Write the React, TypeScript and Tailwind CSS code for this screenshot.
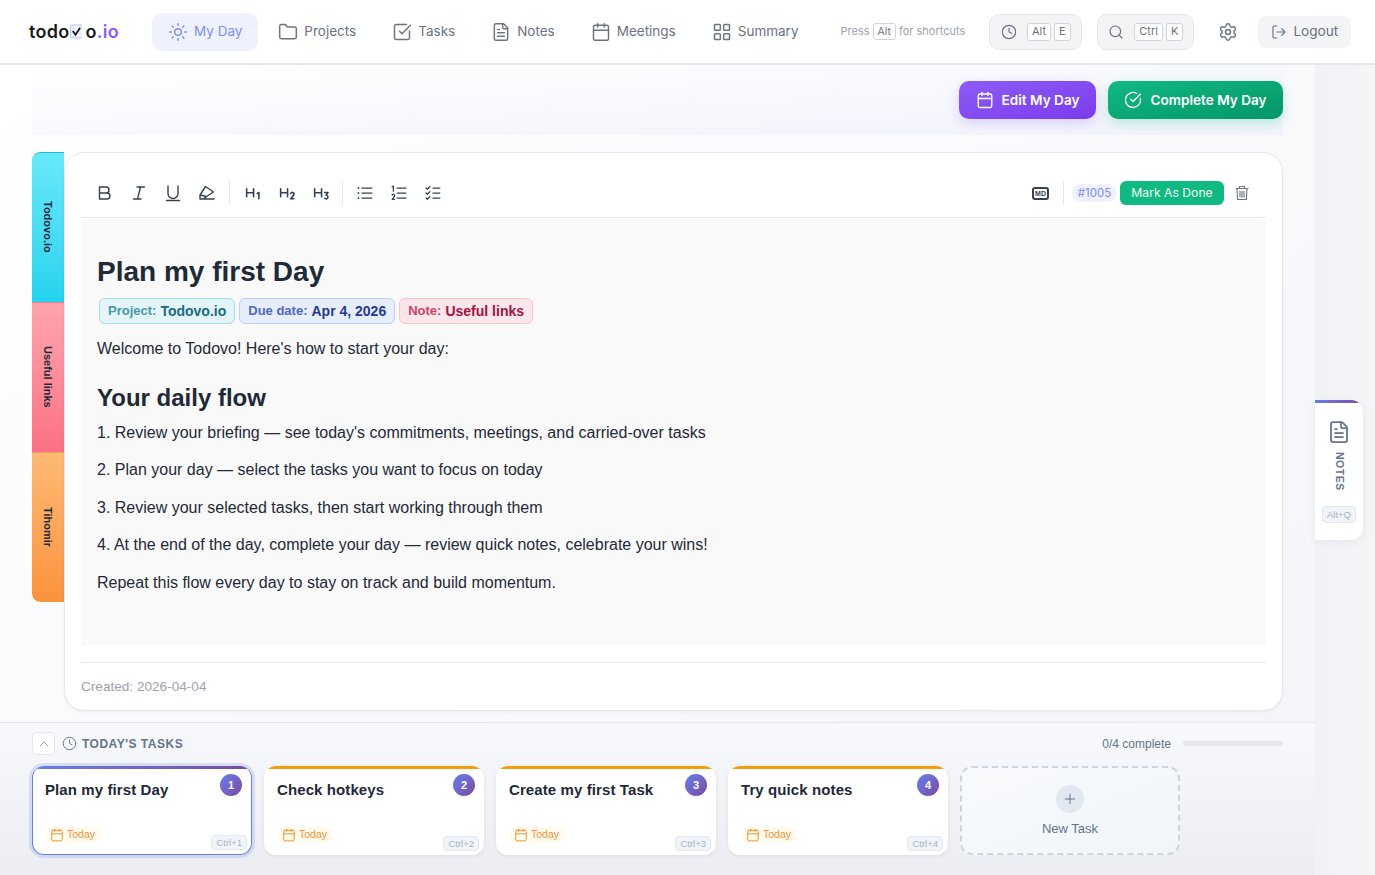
import React from 'react';
import {
  Sun, Folder, SquareCheckBig, FileText, Calendar, LayoutGrid, Clock, Search, Settings, LogOut,
  CircleCheckBig, ChevronUp, Plus,
} from 'lucide-react';
import {
  PiTextHOneBold, PiTextHTwoBold, PiTextHThreeBold,
  PiListBullets, PiListNumbers, PiListChecks,
} from 'react-icons/pi';

const sans = "font-['Liberation_Sans',sans-serif]";

const navItems = [
  { label: 'Projects', icon: Folder },
  { label: 'Tasks', icon: SquareCheckBig },
  { label: 'Notes', icon: FileText },
  { label: 'Meetings', icon: Calendar },
  { label: 'Summary', icon: LayoutGrid },
];

const tabs = [
  { label: 'Todovo.io', className: 'bg-gradient-to-b from-[#67e8f9] to-[#22d3ee] border-t border-[#22b8cf] rounded-tl-lg pb-[2px]' },
  { label: 'Useful links', className: 'bg-gradient-to-b from-[#fda4af] to-[#fb7185] border-t border-[#f27a8a] pb-[2px]' },
  { label: 'Tihomir', className: 'bg-gradient-to-b from-[#fdba74] to-[#fb923c] border-t border-[#f0a060] rounded-bl-lg' },
];

const tasks = [
  { title: 'Plan my first Day', n: 1, active: true },
  { title: 'Check hotkeys', n: 2, active: false },
  { title: 'Create my first Task', n: 3, active: false },
  { title: 'Try quick notes', n: 4, active: false },
];

const steps = [
  "1. Review your briefing — see today's commitments, meetings, and carried-over tasks",
  '2. Plan your day — select the tasks you want to focus on today',
  '3. Review your selected tasks, then start working through them',
  '4. At the end of the day, complete your day — review quick notes, celebrate your wins!',
  'Repeat this flow every day to stay on track and build momentum.',
];

function Key({ children }: { children: React.ReactNode }) {
  return (
    <span className="inline-flex h-[18px] items-center rounded-[3px] border border-[#d1d5db] bg-white px-1 text-[11px] leading-none text-[#6b7280]">
      {children}
    </span>
  );
}

function Logo() {
  return (
    <div className="flex w-[90px] items-center text-[18px] font-semibold leading-none tracking-[0.3px] text-[#1a1a1a]">
      <span>todo</span>
      <svg width="14" height="15" viewBox="0 0 14 15" fill="none" className="mr-px">
        <rect x="0.5" y="0.5" width="13" height="14" rx="1.5" fill="#eef2ff" stroke="#b4bffc" />
        <path d="M3 7 L6 11 L11 3.5" stroke="#111" strokeWidth="1.8" />
      </svg>
      <span className="ml-[2px]">o</span>
      <span className="text-[#8b5cf6]">.io</span>
    </div>
  );
}

function Header() {
  return (
    <header className="flex h-[65px] shrink-0 items-center border-b-2 border-[#e5e7eb] bg-white pl-[29px]">
      <Logo />
      <nav className="ml-[33px] flex items-center gap-1">
        <a className="flex h-[38px] items-center gap-1.5 rounded-[10px] bg-[#eff2fe] px-4 text-[13.5px] text-[#818cf8]">
          <Sun className="h-5 w-5" strokeWidth={1.75} />
          My Day
        </a>
        {navItems.map((item) => (
          <a key={item.label} className="flex h-[38px] items-center gap-1.5 px-4 text-[13.5px] text-[#6b7280]">
            <item.icon className="h-5 w-5" strokeWidth={1.75} />
            {item.label}
          </a>
        ))}
      </nav>
      <div className="ml-[26px] flex items-center gap-[3px] text-[11px] text-[#9ca3af]">
        Press <span className="rounded-[3px] border border-[#d1d5db] px-1 text-[10.5px] text-[#6b7280]">Alt</span> for shortcuts
      </div>
      <button className="ml-6 flex h-9 w-[93px] items-center justify-center gap-2 rounded-[10px] border border-[#e5e7eb] bg-[#f3f4f6] text-[#6b7280]">
        <Clock className="h-4 w-4" strokeWidth={1.75} />
        <span className="ml-0.5 flex gap-[3px]">
          <Key>Alt</Key>
          <Key>E</Key>
        </span>
      </button>
      <button className="ml-[15px] flex h-9 w-[97px] items-center justify-center gap-2 rounded-[10px] border border-[#e5e7eb] bg-[#f3f4f6] text-[#6b7280]">
        <Search className="h-4 w-4" strokeWidth={1.75} />
        <span className="ml-0.5 flex gap-[3px]">
          <Key>Ctrl</Key>
          <Key>K</Key>
        </span>
      </button>
      <Settings className="ml-6 h-5 w-5 text-[#6b7280]" strokeWidth={1.75} />
      <button className="ml-5 flex h-8 w-[93px] items-center justify-center gap-1.5 rounded-lg bg-[#f3f4f6] text-[13.6px] text-[#6b7280]">
        <LogOut className="h-4 w-4" strokeWidth={1.75} />
        Logout
      </button>
    </header>
  );
}

function ToolButton({ children, size = 'text-[20px]' }: { children: React.ReactNode; size?: string }) {
  return <button className={`flex h-7 w-7 items-center justify-center text-[#374151] ${size}`}>{children}</button>;
}

function Glyph({ d }: { d: string }) {
  return (
    <svg width="20" height="20" viewBox="0 0 20 20" fill="none" stroke="currentColor" strokeWidth="1.4" strokeLinejoin="round" strokeLinecap="round">
      <path d={d} />
    </svg>
  );
}

function Toolbar() {
  return (
    <div className="mt-[17px] flex h-[48px] items-start border-b border-[#e5e7eb] pl-2.5 pr-4">
      <div className="flex h-[46px] w-full items-center">
        <div className="flex gap-1.5">
          <ToolButton><Glyph d="M4.5 4 h6.5 a3 3 0 0 1 0 6 H4.5 Z M4.5 10 h7.5 a3 3 0 0 1 0 6 H4.5 Z" /></ToolButton>
          <ToolButton><Glyph d="M8 4 h7.5 M4.5 16 h7.5 M11.5 4 L8.5 16" /></ToolButton>
          <ToolButton><Glyph d="M5 3 v7.5 a5 5 0 0 0 10 0 V3 M3.5 17.5 h13" /></ToolButton>
          <ToolButton><Glyph d="M8.5 3.5 L3 12 V16 H6.5 L9.5 13.5 L16.5 9 Z M3 12 L9.5 13.5 M6.5 16 H17" /></ToolButton>
        </div>
        <div className="mx-2 h-6 w-px bg-[#e5e7eb]" />
        <div className="flex gap-1.5">
          <ToolButton size="text-[17px]"><PiTextHOneBold /></ToolButton>
          <ToolButton size="text-[17px]"><PiTextHTwoBold /></ToolButton>
          <ToolButton size="text-[17px]"><PiTextHThreeBold /></ToolButton>
        </div>
        <div className="mx-2 h-6 w-px bg-[#e5e7eb]" />
        <div className="flex gap-1.5">
          <ToolButton><PiListBullets /></ToolButton>
          <ToolButton><PiListNumbers /></ToolButton>
          <ToolButton><PiListChecks /></ToolButton>
        </div>
        <div className="ml-auto flex items-center">
          <span className={`flex h-[13px] w-[17px] items-center justify-center rounded-[3px] border-2 border-[#374151] text-[7px] font-bold leading-none text-[#374151] ${sans}`}>
            MD
          </span>
          <div className="mx-[14px] h-6 w-px bg-[#e5e7eb]" />
          <span className="mr-[3px] -ml-[6px] w-[45px] rounded-full bg-[#eef2ff] py-0.5 text-center text-[11.5px] leading-[14px] text-[#818cf8]">#1005</span>
          <button className="h-6 w-[104px] rounded-md bg-[#10b981] text-[12.2px] text-[#f0fdf4]">Mark As Done</button>
          <svg width="16" height="16" viewBox="0 0 16 16" fill="none" stroke="#6b7280" strokeWidth="1.1" className="ml-[10px]">
            <path d="M1.5 3.5h13M5.5 3.5V1.5h5v2M3 3.5l.6 11h8.8l.6-11M6 6v6.5M8 6v6.5M10 6v6.5" />
          </svg>
        </div>
      </div>
    </div>
  );
}

function Badge({ label, value, className, labelClass, valueClass }: { label: string; value: string; className: string; labelClass: string; valueClass: string }) {
  return (
    <span className={`inline-flex h-[26px] items-center gap-1 rounded-md border px-2 ${className}`}>
      <span className={`text-[13px] font-bold ${labelClass}`}>{label}</span>
      <span className={`text-sm font-bold ${valueClass}`}>{value}</span>
    </span>
  );
}

function Editor() {
  return (
    <div className={`mt-px h-[426px] rounded-t-md bg-[#f9f9f9] pl-4 pt-[35px] text-[#1f2937] ${sans}`}>
      <h1 className="text-[28px] font-bold leading-[36px]">Plan my first Day</h1>
      <div className="ml-0.5 mt-2 flex gap-1">
        <Badge label="Project:" value="Todovo.io" className="border-[#a5dfe9] bg-[#e3f5f8]" labelClass="text-[#4a97ad]" valueClass="text-[#1a6b80]" />
        <Badge label="Due date:" value="Apr 4, 2026" className="border-[#bcd0fb] bg-[#e6edfc]" labelClass="text-[#5167c4]" valueClass="text-[#27398f]" />
        <Badge label="Note:" value="Useful links" className="border-[#fbc4cf] bg-[#fde6ea]" labelClass="text-[#cc4466]" valueClass="text-[#a3123f]" />
      </div>
      <p className="mt-3 text-base leading-[25.6px]">Welcome to Todovo! Here's how to start your day:</p>
      <h2 className="mt-[21px] text-2xl font-bold leading-[30px]">Your daily flow</h2>
      <div className="mt-[7px] flex flex-col gap-3">
        {steps.map((s) => (
          <p key={s} className="text-base leading-[25.6px]">{s}</p>
        ))}
      </div>
    </div>
  );
}

function TaskCard({ title, n, active }: { title: string; n: number; active: boolean }) {
  return (
    <div
      className={`relative h-[89px] w-[220px] overflow-hidden rounded-xl bg-white ${sans} ${
        active ? 'border-x border-b border-[#667eea] shadow-[0_0_0_3px_rgba(102,126,234,0.2)]' : 'shadow-[0_1px_4px_rgba(0,0,0,0.08)]'
      }`}
    >
      <div className={`h-[3px] ${active ? 'bg-gradient-to-r from-[#667eea] to-[#764ba2]' : 'bg-[#f59e0b]'}`} />
      <div className={`pt-[11px] text-[15px] font-bold leading-[20px] tracking-[0.1px] text-[#1f2937] ${active ? 'pl-3' : 'pl-[13px]'}`}>{title}</div>
      <span className="absolute right-[9px] top-2 flex h-[22px] w-[22px] items-center justify-center rounded-full bg-gradient-to-br from-[#667eea] to-[#764ba2] text-[11px] font-bold text-white">
        {n}
      </span>
      <span className={`absolute top-[61px] flex h-4 items-center gap-[3px] rounded-full bg-[#fffbeb] pl-[5px] pr-1.5 text-[10.5px] text-[#f0923a] ${active ? 'left-3' : 'left-[13px]'}`}>
        <Calendar className="h-[14px] w-[14px] text-[#e08a20]" strokeWidth={1.5} />
        Today
      </span>
      <span className={`absolute bottom-[4px] rounded border border-[#e2e8f0] bg-[#f1f5f9] px-1 text-[9.5px] leading-[13px] text-[#a8b3c4] ${active ? 'right-[4px]' : 'right-[5px]'}`}>
        Ctrl+{n}
      </span>
    </div>
  );
}

function TasksPanel() {
  return (
    <section className="h-[153px] shrink-0 border-t border-[#e5e7eb] bg-gradient-to-b from-[#f8f9fc] to-[#ebedf2] px-8 pt-[9px]">
      <div className="flex h-[23px] items-center">
        <button className="flex h-[23px] w-[23px] items-center justify-center rounded border border-[#e5e7eb] bg-white text-[#9ca3af]">
          <ChevronUp className="h-4 w-4" strokeWidth={1.5} />
        </button>
        <Clock className="ml-[7px] h-[15px] w-[15px] text-[#64748b]" strokeWidth={1.5} />
        <span className={`ml-[5px] text-xs font-bold tracking-[0.5px] text-[#64748b] ${sans}`}>TODAY'S TASKS</span>
        <span className={`ml-auto text-xs text-[#64748b] ${sans}`}>0/4 complete</span>
        <div className="ml-3 h-[5px] w-[100px] rounded-full bg-[#e5e7eb]" />
      </div>
      <div className="mt-[11px] flex gap-3">
        {tasks.map((t) => (
          <TaskCard key={t.n} {...t} />
        ))}
        <div className={`flex h-[89px] w-[220px] flex-col items-center justify-center rounded-xl border-2 border-dashed border-[#cbd5e1] bg-gradient-to-br from-[#f8fafc] to-[#f1f5f9] ${sans}`}>
          <span className="flex h-7 w-7 items-center justify-center rounded-full bg-[#e2e8f0] text-[#64748b]">
            <Plus className="h-4 w-4" strokeWidth={1.5} />
          </span>
          <span className="mt-2 text-[13px] leading-4 text-[#64748b]">New Task</span>
        </div>
      </div>
    </section>
  );
}

export default function App() {
  return (
    <div className="flex h-screen w-screen flex-col overflow-hidden bg-white font-['Inter',sans-serif]">
      <Header />
      <div className="flex min-h-0 flex-1">
        <main className="flex min-w-0 flex-1 flex-col bg-gradient-to-br from-white to-[#f3f4f9]">
          <div className="flex-1 px-8">
            <div className="flex h-[70px] items-start justify-end gap-3 bg-gradient-to-br from-white to-[#f1f3fc] pt-4">
              <button className="flex h-[38px] w-[137px] items-center justify-center gap-2 rounded-[10px] bg-gradient-to-br from-[#8b5cf6] to-[#7c3aed] text-[13.6px] font-semibold text-white shadow-[0_4px_12px_rgba(139,92,246,0.25)]">
                <Calendar className="h-[18px] w-[18px]" strokeWidth={1.75} />
                Edit My Day
              </button>
              <button className="flex h-[38px] w-[175px] items-center justify-center gap-2 rounded-[10px] bg-gradient-to-br from-[#10b981] to-[#059669] text-[13.6px] font-semibold text-white shadow-[0_4px_12px_rgba(16,185,129,0.25)]">
                <CircleCheckBig className="h-[18px] w-[18px]" strokeWidth={1.75} />
                Complete My Day
              </button>
            </div>
            <div className="mt-[17px] flex items-start">
              <div className="flex w-8 shrink-0 flex-col overflow-hidden rounded-l-lg">
                {tabs.map((tab) => (
                  <div key={tab.label} className={`flex h-[150px] items-center justify-center ${tab.className}`}>
                    <span className={`text-[11px] font-bold text-[#1f2937] [writing-mode:vertical-rl] ${sans}`}>{tab.label}</span>
                  </div>
                ))}
              </div>
              <div className="h-[559px] min-w-0 flex-1 rounded-[20px] border border-[#e5e7eb] bg-white px-4 shadow-[0_1px_3px_rgba(0,0,0,0.05)]">
                <Toolbar />
                <Editor />
                <div className={`mt-[17px] border-t border-[#e5e7eb] pt-4 text-[13.6px] leading-[16px] text-[#9ca3af] ${sans}`}>
                  Created: 2026-04-04
                </div>
              </div>
            </div>
          </div>
          <TasksPanel />
        </main>
        <aside className="flex w-[60px] shrink-0 items-center bg-gradient-to-r from-[#f1f2f6] to-[#f5f5f8]">
          <div className="flex h-[140px] w-12 flex-col items-center overflow-hidden rounded-r-xl bg-white shadow-[0_2px_10px_rgba(0,0,0,0.06)]">
            <div className="h-[3px] w-full bg-gradient-to-r from-[#667eea] to-[#764ba2]" />
            <FileText className="mt-[17px] h-6 w-6 text-[#64748b]" strokeWidth={1.75} />
            <span className={`mt-[8px] text-[10.5px] font-bold tracking-[0.5px] text-[#64748b] [writing-mode:vertical-rl] ${sans}`}>NOTES</span>
            <span className={`mt-[15px] rounded border border-[#e2e8f0] bg-[#f1f5f9] px-1 text-[9.5px] leading-[15px] text-[#a8b3c4] ${sans}`}>Alt+Q</span>
          </div>
        </aside>
      </div>
    </div>
  );
}
